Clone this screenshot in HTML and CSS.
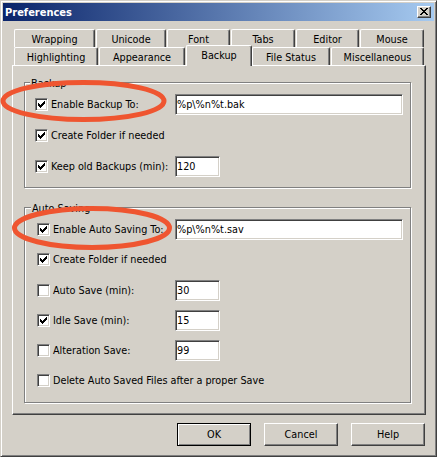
FILE: index.html
```html
<!DOCTYPE html>
<html>
<head>
<meta charset="utf-8">
<title>Preferences</title>
<link rel="stylesheet" href="styles.css">
</head>
<body>
<div class="window">
  <div class="titlebar">
    <span class="title">Preferences</span>
    <span class="close"><svg width="8" height="7" viewBox="0 0 8 7" shape-rendering="crispEdges"><path d="M0 0h2v1h-2z M6 0h2v1h-2z M1 1h2v1h-2z M5 1h2v1h-2z M2 2h4v1h-4z M3 3h2v1h-2z M2 4h4v1h-4z M1 5h2v1h-2z M5 5h2v1h-2z M0 6h2v1h-2z M6 6h2v1h-2z" fill="#000"/></svg></span>
  </div>
  <div class="body">
    <div class="tabs">
      <div class="tabrow">
        <div class="tab t-wrapping">Wrapping</div>
        <div class="tab t-unicode">Unicode</div>
        <div class="tab t-font">Font</div>
        <div class="tab t-tabs">Tabs</div>
        <div class="tab t-editor">Editor</div>
        <div class="tab t-mouse">Mouse</div>
      </div>
      <div class="tabrow">
        <div class="tab t-highlighting">Highlighting</div>
        <div class="tab t-appearance">Appearance</div>
        <div class="tab t-backup sel">Backup</div>
        <div class="tab t-filestatus">File Status</div>
        <div class="tab t-misc">Miscellaneous</div>
      </div>
    </div>
    <div class="panel">
      <div class="group group-backup">
        <span class="legend">Backup</span>
        <div class="rows">
          <div class="row has-input">
            <span class="lbl"><span class="cb"><svg width="11" height="11" viewBox="0 0 11 11" shape-rendering="crispEdges"><path class="chk" d="M8 2h1v1h-1z M7 3h2v1h-2z M2 4h1v1h-1z M6 4h3v1h-3z M2 5h2v1h-2z M5 5h3v1h-3z M2 6h5v1h-5z M3 7h3v1h-3z M4 8h1v1h-1z"/></svg></span>Enable Backup To:</span>
            <input class="field field-wide" type="text" value="%p\%n%t.bak">
          </div>
          <div class="row">
            <span class="lbl"><span class="cb"><svg width="11" height="11" viewBox="0 0 11 11" shape-rendering="crispEdges"><path class="chk" d="M8 2h1v1h-1z M7 3h2v1h-2z M2 4h1v1h-1z M6 4h3v1h-3z M2 5h2v1h-2z M5 5h3v1h-3z M2 6h5v1h-5z M3 7h3v1h-3z M4 8h1v1h-1z"/></svg></span>Create Folder if needed</span>
          </div>
          <div class="row has-input">
            <span class="lbl"><span class="cb"><svg width="11" height="11" viewBox="0 0 11 11" shape-rendering="crispEdges"><path class="chk" d="M8 2h1v1h-1z M7 3h2v1h-2z M2 4h1v1h-1z M6 4h3v1h-3z M2 5h2v1h-2z M5 5h3v1h-3z M2 6h5v1h-5z M3 7h3v1h-3z M4 8h1v1h-1z"/></svg></span>Keep old Backups (min):</span>
            <input class="field field-short" type="text" value="120">
          </div>
        </div>
      </div>
      <div class="group group-auto">
        <span class="legend">Auto Saving</span>
        <div class="rows">
          <div class="row has-input">
            <span class="lbl"><span class="cb"><svg width="11" height="11" viewBox="0 0 11 11" shape-rendering="crispEdges"><path class="chk" d="M8 2h1v1h-1z M7 3h2v1h-2z M2 4h1v1h-1z M6 4h3v1h-3z M2 5h2v1h-2z M5 5h3v1h-3z M2 6h5v1h-5z M3 7h3v1h-3z M4 8h1v1h-1z"/></svg></span>Enable Auto Saving To:</span>
            <input class="field field-wide" type="text" value="%p\%n%t.sav">
          </div>
          <div class="row">
            <span class="lbl"><span class="cb"><svg width="11" height="11" viewBox="0 0 11 11" shape-rendering="crispEdges"><path class="chk" d="M8 2h1v1h-1z M7 3h2v1h-2z M2 4h1v1h-1z M6 4h3v1h-3z M2 5h2v1h-2z M5 5h3v1h-3z M2 6h5v1h-5z M3 7h3v1h-3z M4 8h1v1h-1z"/></svg></span>Create Folder if needed</span>
          </div>
          <div class="row has-input">
            <span class="lbl"><span class="cb"></span>Auto Save (min):</span>
            <input class="field field-short" type="text" value="30">
          </div>
          <div class="row has-input">
            <span class="lbl"><span class="cb"><svg width="11" height="11" viewBox="0 0 11 11" shape-rendering="crispEdges"><path class="chk" d="M8 2h1v1h-1z M7 3h2v1h-2z M2 4h1v1h-1z M6 4h3v1h-3z M2 5h2v1h-2z M5 5h3v1h-3z M2 6h5v1h-5z M3 7h3v1h-3z M4 8h1v1h-1z"/></svg></span>Idle Save (min):</span>
            <input class="field field-short" type="text" value="15">
          </div>
          <div class="row has-input">
            <span class="lbl"><span class="cb"></span>Alteration Save:</span>
            <input class="field field-short" type="text" value="99">
          </div>
          <div class="row">
            <span class="lbl"><span class="cb"></span>Delete Auto Saved Files after a proper Save</span>
          </div>
        </div>
      </div>
    </div>
    <div class="buttons">
      <div class="btn default">OK</div>
      <div class="btn">Cancel</div>
      <div class="btn">Help</div>
    </div>
  </div>
  <svg class="marks" width="437" height="457" viewBox="0 0 437 457">
    <ellipse cx="83.5" cy="101" rx="80.5" ry="18.5" fill="none" stroke="#EF5530" stroke-width="5"/>
    <ellipse cx="92" cy="228" rx="77.5" ry="19.5" fill="none" stroke="#EF5530" stroke-width="5"/>
  </svg>
</div>
</body>
</html>
```
FILE: styles.css
```css
* { box-sizing: border-box; }
html, body { margin: 0; padding: 0; }
body {
  background: #D4D0C8;
  font-family: "DejaVu Sans Condensed", "DejaVu Sans", sans-serif;
  font-stretch: condensed;
  font-size: 10.75px;
  color: #000;
}
.window {
  position: relative;
  width: 437px;
  height: 457px;
  background: #D4D0C8;
  border: 1px solid;
  border-color: #D4D0C8 #404040 #404040 #D4D0C8;
  box-shadow: inset 1px 1px #fff, inset -1px -1px #808080;
  padding: 2px;
}
.titlebar {
  height: 18px;
  display: flex;
  align-items: center;
  justify-content: space-between;
  padding: 0 3px 0 2px;
  background: linear-gradient(to right, #0A246A, #A6CAF0);
}
.title {
  color: #fff;
  font-weight: bold;
  font-size: 11px;
  line-height: 13px;
}
.close {
  width: 14px;
  height: 12px;
  display: flex;
  align-items: center;
  justify-content: center;
  padding-bottom: 1px;
  background: #D4D0C8;
  border: 1px solid;
  border-color: #fff #404040 #404040 #fff;
  box-shadow: inset -1px -1px #808080;
}
.close svg { display: block; }
.body { padding: 8px 0 0 9px; }
.tabs { margin: 0 2px; width: 410px; }
.tabrow { display: flex; align-items: flex-end; height: 18px; }
.tab {
  flex: none;
  height: 18px;
  margin-right: 1px;
  border: 1px solid;
  border-bottom: 0;
  border-color: #fff #404040 #fff #fff;
  border-radius: 2px 2px 0 0;
  box-shadow: inset -1px 0 #808080;
  background: #D4D0C8;
  text-align: center;
  padding-top: 3px;
  line-height: 13px;
  white-space: nowrap;
}
.tab:last-child { margin-right: 0; }
.tab.sel {
  height: 21px;
  margin-bottom: -1px;
  margin-right: 0;
  position: relative;
  z-index: 1;
}
.t-wrapping { width: 81px; }
.t-unicode { width: 70px; }
.t-font { width: 63px; }
.t-tabs { width: 64px; }
.t-editor { width: 63px; }
.t-mouse { width: 64px; }
.t-highlighting { width: 84px; }
.t-appearance { width: 86px; }
.t-backup { width: 66px; }
.t-filestatus { width: 78px; }
.t-misc { width: 93px; }
.panel {
  width: 414px;
  height: 350px;
  border: 1px solid;
  border-color: #fff #404040 #404040 #fff;
  box-shadow: inset -1px -1px #808080;
  padding: 16px 14px 0 11px;
}
.group {
  display: flex;
  flex-direction: column;
  border: 1px solid #808080;
  box-shadow: inset 1px 1px #fff, 1px 1px #fff;
}
.group-backup { padding: 0 0 10px 10px; --lw: 140px; }
.group-auto { margin-top: 19px; padding: 0 0 10.5px 12px; --lw: 138px; }
.legend {
  align-self: flex-start;
  height: 13px;
  line-height: 13px;
  margin-top: -6px;
  margin-bottom: 4px;
  padding: 0 1px;
  background: #D4D0C8;
}
.group-backup .legend { margin-left: -5px; }
.group-auto .legend { margin-left: -6px; }
.rows { display: flex; flex-direction: column; }
.group-backup .rows { gap: 10px; }
.group-auto .rows { gap: 9.3px; }
.row { display: flex; align-items: center; height: 21px; }
.lbl { display: flex; align-items: center; white-space: nowrap; line-height: 13px; }
.row.has-input .lbl { width: var(--lw); flex: none; }
.cb {
  width: 13px;
  height: 13px;
  flex: none;
  margin-right: 3px;
  background: #fff;
  border: 1px solid;
  border-color: #808080 #fff #fff #808080;
  box-shadow: inset 1px 1px #404040, inset -1px -1px #D4D0C8;
}
.cb svg { display: block; }
.chk { fill: #000; }
.field {
  height: 21px;
  margin: 0;
  padding: 0 1px;
  border: 1px solid;
  border-color: #808080 #fff #fff #808080;
  box-shadow: inset 1px 1px #404040, inset -1px -1px #D4D0C8;
  background: #fff;
  font: inherit;
  font-stretch: condensed;
  color: #000;
  outline: none;
  border-radius: 0;
}
.field-wide { width: 228px; }
.field-short { width: 45px; }
.buttons {
  display: flex;
  justify-content: flex-end;
  gap: 13px;
  margin-top: 8px;
  width: 414px;
  padding-right: 1px;
}
.btn {
  width: 74px;
  height: 23px;
  display: flex;
  align-items: center;
  justify-content: center;
  line-height: 13px;
  border: 1px solid;
  border-color: #fff #404040 #404040 #fff;
  box-shadow: inset -1px -1px #808080;
}
.btn.default {
  border-color: #000;
  box-shadow: inset 1px 1px #fff, inset -1px -1px #808080;
}
.marks {
  position: absolute;
  left: -1px;
  top: -1px;
  pointer-events: none;
}
```
